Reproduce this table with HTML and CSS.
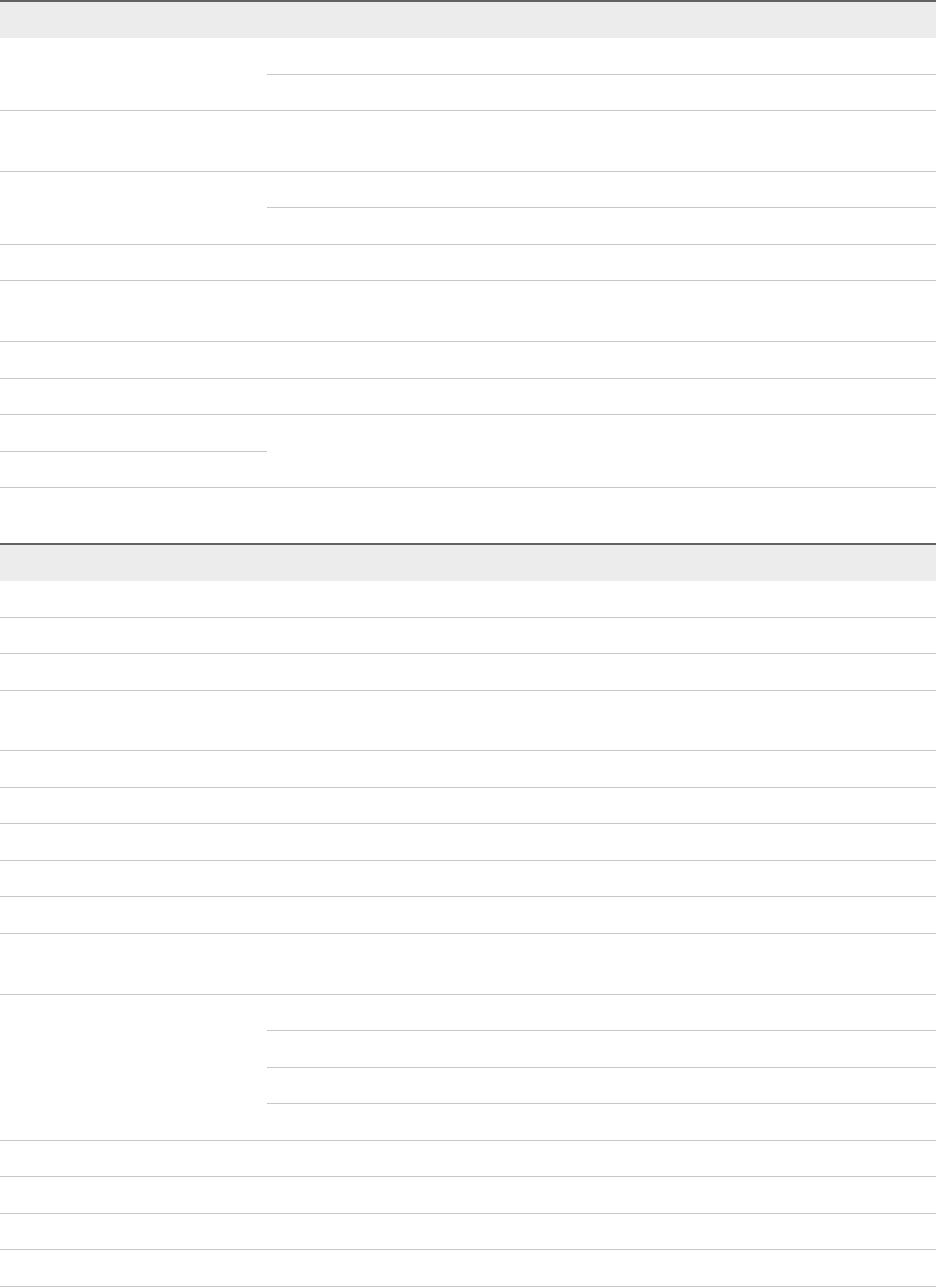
FILE: index.html
```html
<!DOCTYPE html>
<html lang="en">
<head>
<meta charset="utf-8">
<title>Tables</title>
<link rel="stylesheet" href="styles.css">
</head>
<body>
<table class="grid">
  <thead>
    <tr class="head"><th class="c-left"></th><th class="c-right"></th></tr>
  </thead>
  <tbody>
    <tr class="row"><td rowspan="2"></td><td></td></tr>
    <tr class="row"><td></td></tr>
    <tr class="row-tall"><td></td><td></td></tr>
    <tr class="row"><td rowspan="2"></td><td></td></tr>
    <tr class="row"><td></td></tr>
    <tr class="row"><td></td><td></td></tr>
    <tr class="row-tall"><td></td><td></td></tr>
    <tr class="row"><td></td><td></td></tr>
    <tr class="row"><td></td><td></td></tr>
    <tr class="row"><td></td><td rowspan="2"></td></tr>
    <tr class="row"><td></td></tr>
  </tbody>
</table>

<table class="grid second">
  <thead>
    <tr class="head"><th class="c-left"></th><th class="c-right"></th></tr>
  </thead>
  <tbody>
    <tr class="row"><td></td><td></td></tr>
    <tr class="row"><td></td><td></td></tr>
    <tr class="row"><td></td><td></td></tr>
    <tr class="row-tall"><td></td><td></td></tr>
    <tr class="row"><td></td><td></td></tr>
    <tr class="row"><td></td><td></td></tr>
    <tr class="row"><td></td><td></td></tr>
    <tr class="row"><td></td><td></td></tr>
    <tr class="row"><td></td><td></td></tr>
    <tr class="row-tall"><td></td><td></td></tr>
    <tr class="row"><td rowspan="4"></td><td></td></tr>
    <tr class="row"><td></td></tr>
    <tr class="row"><td></td></tr>
    <tr class="row"><td></td></tr>
    <tr class="row"><td></td><td></td></tr>
    <tr class="row"><td></td><td></td></tr>
    <tr class="row"><td></td><td></td></tr>
    <tr class="row"><td></td><td></td></tr>
  </tbody>
</table>
</body>
</html>
```

FILE: styles.css
```css
html, body {
  margin: 0;
  padding: 0;
  background: #ffffff;
  font-family: "Liberation Sans", Arial, sans-serif;
  font-size: 14px;
  color: #333333;
}

.grid {
  width: 936px;
  table-layout: fixed;
  border-collapse: separate;
  border-spacing: 0;
}

.second {
  margin-top: 55px;
}

.c-left {
  width: 267px;
}

.grid th {
  padding: 0;
  background: #ececec;
  border-top: 2px solid #636363;
}

.grid td {
  padding: 0;
  border-bottom: 1px solid #c8c8c8;
}

.head {
  height: 38px;
}

.row {
  height: 36.5px;
}

.row-tall {
  height: 60.75px;
}
```
